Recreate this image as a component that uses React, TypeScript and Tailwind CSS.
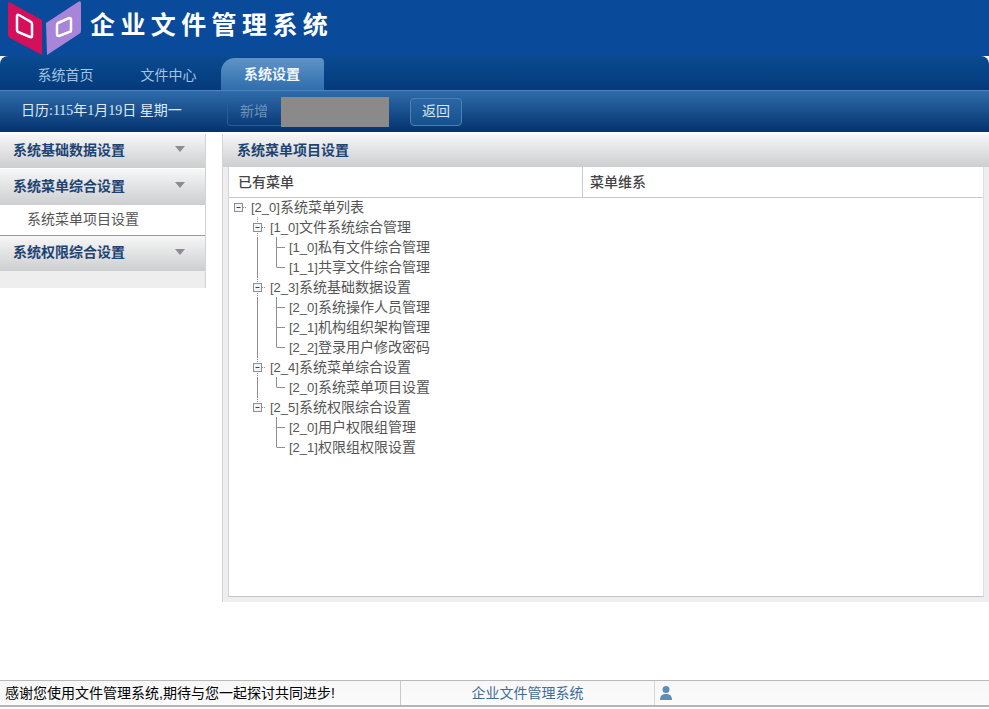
type Cell = 'blank' | 'line' | 'tee' | 'elbow' | 'open' | 'openLine' | 'root';

const treeRows: { cells: Cell[]; code: string; label: string }[] = [
  { cells: ['root'], code: '[2_0]', label: '系统菜单列表' },
  { cells: ['blank', 'openLine'], code: '[1_0]', label: '文件系统综合管理' },
  { cells: ['blank', 'line', 'tee'], code: '[1_0]', label: '私有文件综合管理' },
  { cells: ['blank', 'line', 'elbow'], code: '[1_1]', label: '共享文件综合管理' },
  { cells: ['blank', 'openLine'], code: '[2_3]', label: '系统基础数据设置' },
  { cells: ['blank', 'line', 'tee'], code: '[2_0]', label: '系统操作人员管理' },
  { cells: ['blank', 'line', 'tee'], code: '[2_1]', label: '机构组织架构管理' },
  { cells: ['blank', 'line', 'elbow'], code: '[2_2]', label: '登录用户修改密码' },
  { cells: ['blank', 'openLine'], code: '[2_4]', label: '系统菜单综合设置' },
  { cells: ['blank', 'line', 'elbow'], code: '[2_0]', label: '系统菜单项目设置' },
  { cells: ['blank', 'open'], code: '[2_5]', label: '系统权限综合设置' },
  { cells: ['blank', 'blank', 'tee'], code: '[2_0]', label: '用户权限组管理' },
  { cells: ['blank', 'blank', 'elbow'], code: '[2_1]', label: '权限组权限设置' },
];

function TreeGlyph({ type }: { type: Cell }) {
  const stroke = '#8f8f8f';
  const up = type === 'line' || type === 'tee' || type === 'elbow' || type === 'open' || type === 'openLine';
  const down = type === 'line' || type === 'tee' || type === 'openLine';
  const box = type === 'root' || type === 'open' || type === 'openLine';
  return (
    <svg width="19" height="20" viewBox="0 0 19 20" className="shrink-0">
      {up && <path d="M9.5 0V10" stroke={stroke} strokeDasharray={box ? '1 1' : undefined} />}
      {down && <path d="M9.5 10V20" stroke={stroke} strokeDasharray={box ? '1 1' : undefined} />}
      {(type === 'tee' || type === 'elbow') && <path d="M9.5 10.5H18" stroke={stroke} />}
      {box && (
        <>
          <path d="M14 10.5H18" stroke={stroke} strokeDasharray="1 1" />
          <rect x="5.5" y="6.5" width="8" height="8" fill="#f4f4f4" stroke="#8a8f96" />
          <path d="M7.5 10.5H11.5" stroke="#3f4650" />
        </>
      )}
    </svg>
  );
}

function Caret() {
  return (
    <svg width="10" height="6" viewBox="0 0 10 6">
      <path d="M0 0H10L5 6Z" fill="#8a8d92" />
    </svg>
  );
}

function SideHeader({ title, className }: { title: string; className?: string }) {
  return (
    <div className={`flex items-center justify-between bg-linear-to-b from-[#f7f7f7] to-[#cdced0] pr-[20px] pb-[2px] pl-[13px] ${className}`}>
      <span className="text-[14px] font-bold text-[#1d4373]">{title}</span>
      <span className="mb-[2px] flex"><Caret /></span>
    </div>
  );
}

export default function App() {
  return (
    <div className="flex h-[709px] w-full flex-col overflow-hidden bg-white font-['Liberation_Sans','Noto_Sans_CJK_SC',sans-serif] text-[14px]">
      <header className="flex h-[56px] shrink-0 bg-[#0a4a9a]">
        <svg width="84" height="56" viewBox="0 0 84 56" className="shrink-0">
          <path d="M8 4Q8 1 11 3L42 20V55L10 38Q8 37 8 35Z" fill="#d4105a" />
          <path d="M46 23L78 2Q81 0 81 3V31Q81 33 79 34L47 55Z" fill="#a885d8" />
          <path d="M17 16Q17 14 19 15L31 22Q32 23 32 24V36Q32 38 30 37L18 32Q17 31 17 30Z" fill="none" stroke="#fff" strokeWidth="2.5" />
          <path d="M58 23L69 18Q71 18 71 20V30Q71 32 69 32L59 36Q57 36 57 34V25Q57 24 58 23Z" fill="none" stroke="#fff" strokeWidth="2.5" />
        </svg>
        <h1 className="mt-[10px] ml-[6px] text-[25px] leading-[30px] font-bold tracking-[5.4px] whitespace-nowrap text-white">企业文件管理系统</h1>
      </header>

      <nav className="flex h-[34px] shrink-0 items-end rounded-t-lg bg-linear-to-b from-[#0a4a90] to-[#043a7c] pl-[10px]">
        <div className="flex h-[32px] w-[103px] items-center justify-center pt-[2px] pl-[8px] text-[#a5c3e2]">系统首页</div>
        <div className="flex h-[32px] w-[108px] items-center justify-center pt-[2px] pl-[3px] text-[#a5c3e2]">文件中心</div>
        <div className="flex h-[32px] w-[103px] items-center justify-center rounded-tl-[14px] rounded-tr-[4px] bg-linear-to-b from-[#5f94c8] to-[#2f6dac] pr-[1px] font-bold text-[#f2f6fb]">系统设置</div>
      </nav>

      <div className="flex h-[42px] shrink-0 items-center border-t border-[#4f84ba] bg-linear-to-b from-[#2f6cab] to-[#03336f] pl-[21px]">
        <div className="w-[206px] shrink-0 pb-[2px] font-['Liberation_Serif','Noto_Sans_CJK_SC',serif] whitespace-nowrap text-[#dce9f6]">日历:115年1月19日 星期一</div>
        <div className="flex h-[28px] w-[54px] items-center justify-center rounded-l-[4px] border border-r-0 border-[#2a5d96] pr-[1px] text-[#6f92b8]">新增</div>
        <div className="h-[30px] w-[108px] bg-[#8a8a8a]" />
        <div className="ml-[21px] flex h-[28px] w-[52px] items-center justify-center rounded-[4px] border border-[#4f80b0] bg-linear-to-b from-[#2a66a5] to-[#15508f] text-[#d8e5f2]">返回</div>
      </div>

      <div className="flex min-h-0 flex-1 pt-[2px]">
        <aside className="w-[206px] shrink-0 self-start border-r border-[#d2d2d2]">
          <SideHeader title="系统基础数据设置" className="h-[34px]" />
          <SideHeader title="系统菜单综合设置" className="mt-[1px] h-[36px]" />
          <div className="flex h-[30px] items-center pb-[2px] pl-[27px] text-[#555]">系统菜单项目设置</div>
          <SideHeader title="系统权限综合设置" className="h-[36px] border-t border-[#9a9a9a]" />
          <div className="h-[17px] bg-[#eeeeee]" />
        </aside>

        <main className="ml-[16px] flex h-[468px] min-w-0 flex-1 flex-col border-l border-[#d4d4d4]">
          <div className="flex h-[33px] shrink-0 items-center bg-linear-to-b from-[#f7f7f7] to-[#cdced0] pl-[14px] font-bold text-[#1d4373]">系统菜单项目设置</div>
          <div className="flex min-h-0 flex-1 bg-[#eeeef1] pr-[5px] pb-[5px] pl-[5px]">
            <div className="flex min-w-0 flex-1 flex-col border-r border-b border-l border-r-[#dcdce0] border-b-[#c4c4c8] border-l-[#d4d4d8] bg-white">
              <div className="flex h-[31px] shrink-0 border-b border-[#c9c9c9] font-medium text-[#444]">
                <div className="flex w-[353px] items-center pl-[9px]">已有菜单</div>
                <div className="flex flex-1 items-center border-l border-[#c9c9c9] pl-[7px]">菜单维系</div>
              </div>
              <div className="-mt-[1px] flex-1">
                {treeRows.map((row, i) => (
                  <div key={i} className="flex h-[20px] items-center text-[#555]">
                    {row.cells.map((cell, j) => (
                      <TreeGlyph key={j} type={cell} />
                    ))}
                    <span className="ml-[3px] whitespace-nowrap"><span className="text-[13px]">{row.code}</span>{row.label}</span>
                  </div>
                ))}
              </div>
            </div>
          </div>
        </main>
      </div>

      <footer className="mb-[2px] flex h-[27px] shrink-0 border-t border-b-2 border-t-[#b9b9b9] border-b-[#b5b5b5] bg-linear-to-b from-[#f7f7f7] to-[#fbfbfb]">
        <div className="flex w-[401px] items-center border-r border-[#c9c9c9] pl-[5px] text-black">感谢您使用文件管理系统,期待与您一起探讨共同进步!</div>
        <div className="flex w-[253px] items-center justify-center text-[#3f6c96]">企业文件管理系统</div>
        <div className="flex flex-1 items-center border-l border-[#d5d5d5] pl-[4px]">
          <svg width="14" height="16" viewBox="0 0 14 16">
            <circle cx="7" cy="4.5" r="3.5" fill="#5b8fb8" />
            <path d="M1 15C1 10.5 3.5 9 7 9S13 10.5 13 15Z" fill="#5b8fb8" />
          </svg>
        </div>
      </footer>
    </div>
  );
}
